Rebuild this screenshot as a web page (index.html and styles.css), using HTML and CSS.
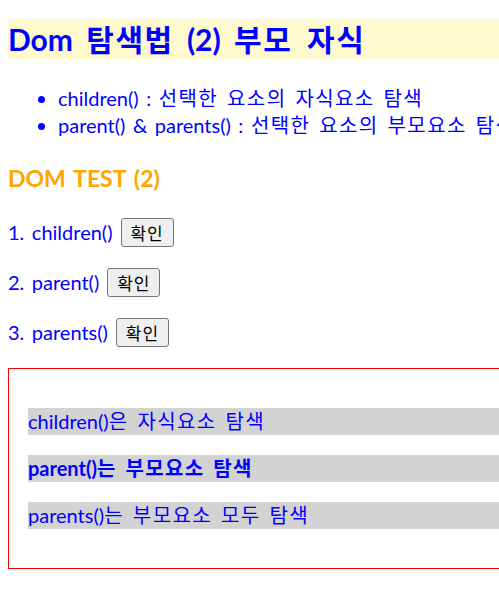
FILE: index.html
```html
<!DOCTYPE html>
<html lang="ko">
<head>
<meta charset="utf-8">
<title>Dom 탐색법 (2)</title>
<link rel="stylesheet" href="styles.css">
</head>
<body>
<div class="page">
  <h1 class="title">Dom <span class="ko">탐색법</span> (2) <span class="ko">부모 자식</span></h1>
  <ul class="notes">
    <li>children() : <span class="ko">선택한 요소의 자식요소 탐색</span></li>
    <li>parent() &amp; parents() : <span class="ko">선택한 요소의 부모요소 탐색</span></li>
  </ul>
  <h2 class="subtitle">DOM TEST (2)</h2>
  <p class="test"><span>1. children()</span><button class="btn" type="button">확인</button></p>
  <p class="test"><span>2. parent()</span><button class="btn" type="button">확인</button></p>
  <p class="test"><span>3. parents()</span><button class="btn" type="button">확인</button></p>
  <div class="box">
    <p class="item">children()<span class="ko">은 자식요소 탐색</span></p>
    <p class="item bold">parent()<span class="ko">는 부모요소 탐색</span></p>
    <p class="item">parents()<span class="ko">는 부모요소 모두 탐색</span></p>
  </div>
</div>
</body>
</html>
```
FILE: styles.css
```css
html {
  overflow: hidden;
}
body {
  margin: 0;
  padding: 0 8px;
  font-family: "Lato", "Noto Sans CJK KR", sans-serif;
  color: blue;
  background: #fff;
  word-spacing: 0.15em;
}
.page {
  width: 640px;
  white-space: nowrap;
}
.ko {
  letter-spacing: 0.07em;
}
.title {
  margin: 19px 0 0;
  font-size: 30px;
  line-height: 40px;
  font-weight: bold;
  color: blue;
  background: #fffacd;
  word-spacing: 0.2em;
}
.title .ko {
  letter-spacing: 0.05em;
}
.notes {
  margin: 26px 0 0;
  padding-left: 50px;
  font-size: 20px;
  line-height: 27px;
}
.subtitle {
  margin: 24px 0 23px;
  font-size: 23px;
  line-height: 30px;
  color: orange;
}
.test {
  display: flex;
  align-items: center;
  gap: 8px;
  height: 32px;
  margin: 18px 0;
  font-size: 20px;
  line-height: 32px;
}
.btn {
  width: 53px;
  height: 29px;
  padding: 0;
  font-family: "Noto Sans CJK KR", sans-serif;
  font-size: 17px;
  line-height: 27px;
  letter-spacing: 1px;
  word-spacing: 0;
  color: #000;
  background: #efefef;
  border: 1px solid #767676;
  border-radius: 3px;
}
.box {
  margin-top: 20px;
  padding: 19px;
  border: 1px solid red;
}
.item {
  margin: 20px 0;
  font-size: 20px;
  line-height: 27px;
  background: lightgray;
}
.bold {
  font-weight: bold;
}
```
